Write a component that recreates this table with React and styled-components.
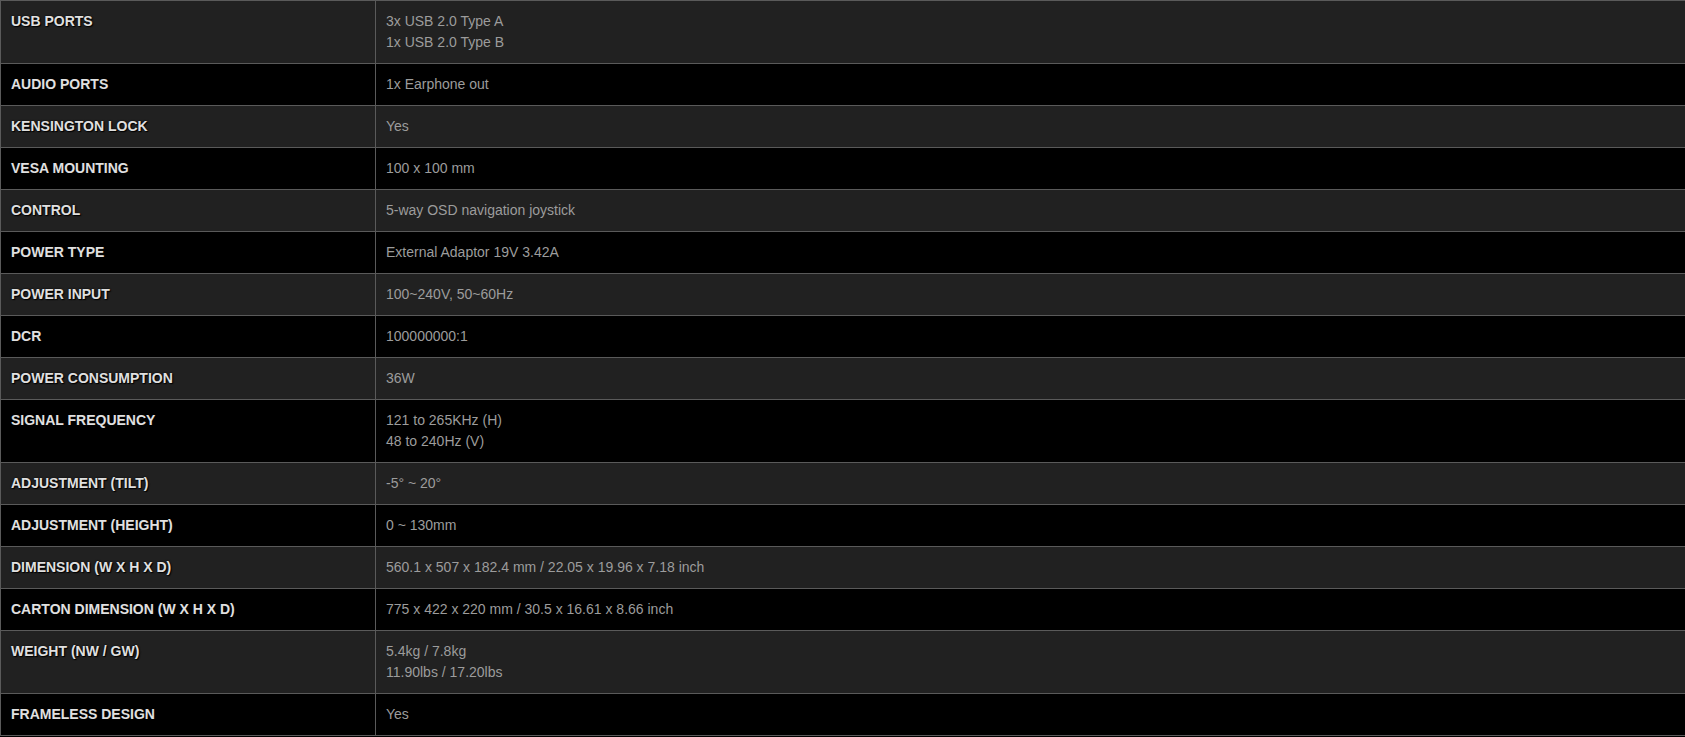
import React from "react";
import styled, { createGlobalStyle } from "styled-components";

const specs = [
  { label: "USB PORTS", value: ["3x USB 2.0 Type A", "1x USB 2.0 Type B"] },
  { label: "AUDIO PORTS", value: ["1x Earphone out"] },
  { label: "KENSINGTON LOCK", value: ["Yes"] },
  { label: "VESA MOUNTING", value: ["100 x 100 mm"] },
  { label: "CONTROL", value: ["5-way OSD navigation joystick"] },
  { label: "POWER TYPE", value: ["External Adaptor 19V 3.42A"] },
  { label: "POWER INPUT", value: ["100~240V, 50~60Hz"] },
  { label: "DCR", value: ["100000000:1"] },
  { label: "POWER CONSUMPTION", value: ["36W"] },
  { label: "SIGNAL FREQUENCY", value: ["121 to 265KHz (H)", "48 to 240Hz (V)"] },
  { label: "ADJUSTMENT (TILT)", value: ["-5° ~ 20°"] },
  { label: "ADJUSTMENT (HEIGHT)", value: ["0 ~ 130mm"] },
  { label: "DIMENSION (W X H X D)", value: ["560.1 x 507 x 182.4 mm / 22.05 x 19.96 x 7.18 inch"] },
  { label: "CARTON DIMENSION (W X H X D)", value: ["775 x 422 x 220 mm / 30.5 x 16.61 x 8.66 inch"] },
  { label: "WEIGHT (NW / GW)", value: ["5.4kg / 7.8kg", "11.90lbs / 17.20lbs"] },
  { label: "FRAMELESS DESIGN", value: ["Yes"] },
];

const GlobalStyle = createGlobalStyle`
  body {
    margin: 0;
    background: #000;
    font-family: "Liberation Sans", Arial, sans-serif;
  }
`;

const SpecTable = () => (
  <S.Table>
    <tbody>
      {specs.map((spec, i) => (
        <S.Row key={spec.label} $odd={i % 2 === 0}>
          <S.Label>{spec.label}</S.Label>
          <S.Value>
            {spec.value.map((line) => (
              <div key={line}>{line}</div>
            ))}
          </S.Value>
        </S.Row>
      ))}
    </tbody>
  </S.Table>
);

const App = () => (
  <>
    <GlobalStyle />
    <SpecTable />
  </>
);

export default App;

const S = {
  Table: styled.table`
    width: 100%;
    border-collapse: collapse;
    table-layout: fixed;
    font-size: 14px;
    line-height: 21px;
  `,
  Row: styled.tr`
    background-color: ${(p) => (p.$odd ? "#212121" : "#000")};
  `,
  Label: styled.td`
    width: 354px;
    padding: 10px;
    vertical-align: top;
    border: 1px solid #5a5a5a;
    color: #e0e0e0;
    font-weight: bold;
    text-shadow: 0 0 2px #000, 1px 1px 1px #000;
  `,
  Value: styled.td`
    padding: 10px;
    vertical-align: top;
    border-top: 1px solid #5a5a5a;
    border-bottom: 1px solid #5a5a5a;
    color: #9c9c9c;
  `,
};
